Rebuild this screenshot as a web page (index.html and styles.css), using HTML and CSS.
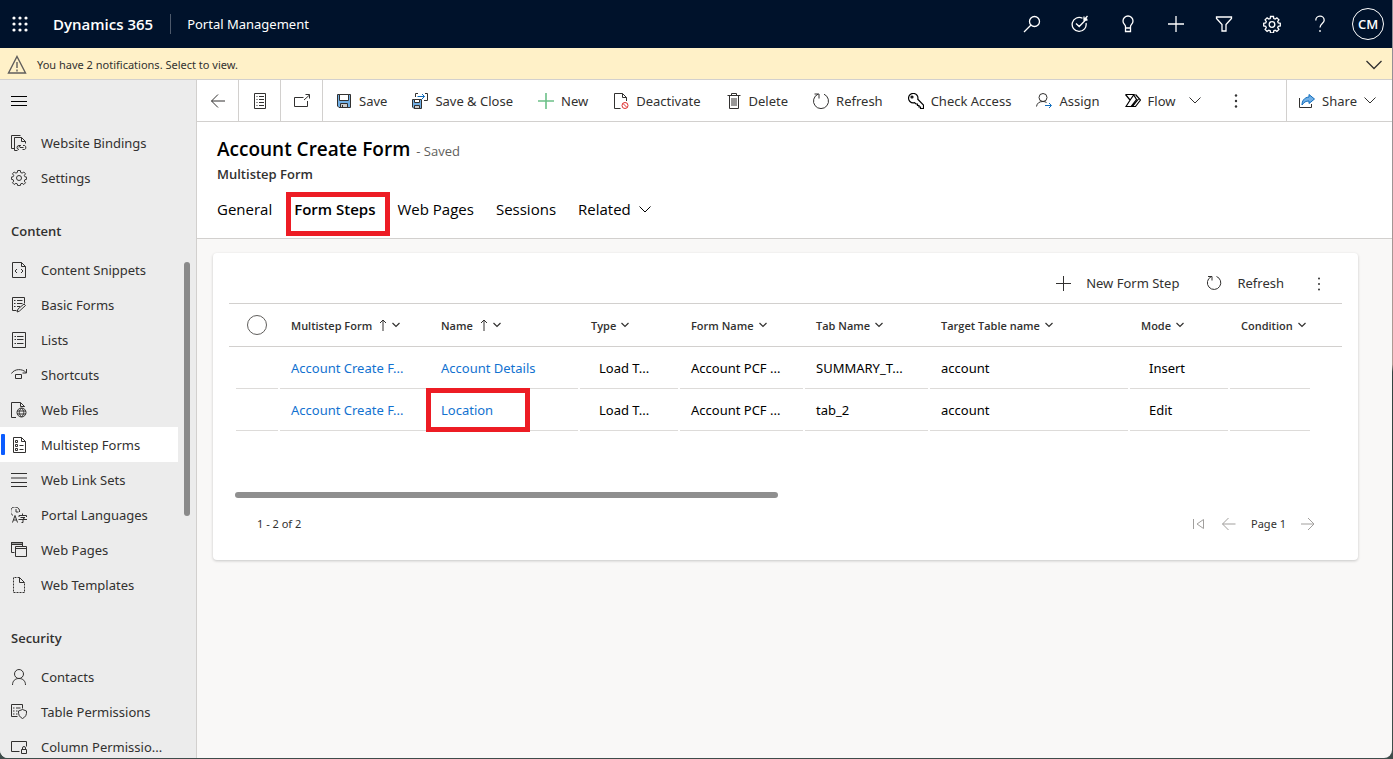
FILE: index.html
```
<!DOCTYPE html>
<html lang="en">
<head>
<meta charset="utf-8">
<title>Portal Management - Dynamics 365</title>
<link rel="stylesheet" href="styles.css">
</head>
<body>
<div class="window">
  <header class="topbar">
    <button class="icon-btn waffle" aria-label="App launcher"><svg class="ic" viewBox="0 0 16 16"><g fill="#fff" stroke="none"><circle cx="2" cy="2" r="1.6"/><circle cx="8" cy="2" r="1.6"/><circle cx="14" cy="2" r="1.6"/><circle cx="2" cy="8" r="1.6"/><circle cx="8" cy="8" r="1.6"/><circle cx="14" cy="8" r="1.6"/><circle cx="2" cy="14" r="1.6"/><circle cx="8" cy="14" r="1.6"/><circle cx="14" cy="14" r="1.6"/></g></svg></button>
    <a class="brand" href="#">Dynamics 365</a>
    <a class="app-name" href="#">Portal Management</a>
    <div class="top-actions">
      <button class="icon-btn" aria-label="Search"><svg class="ic lg" viewBox="0 0 18 18"><circle cx="11.5" cy="6.5" r="5"/><path d="M8 10 1 17"/></svg></button>
      <button class="icon-btn" aria-label="Assistant"><svg class="ic lg" viewBox="0 0 18 18"><path d="M11.500 3.300A7 7 0 1 0 15 8M5 8.500l3.200 3L16 3.500M13 1.500v3.500h3.500M13 5l3.500-4"/></svg></button>
      <button class="icon-btn" aria-label="Ideas"><svg class="ic lg" viewBox="0 0 18 18"><path d="M6.500 13v-1.500C6.500 9.500 4 9 4 6a5 5 0 0 1 10 0c0 3-2.500 3.500-2.500 5.500V13zM6.500 13v3.500h5V13"/></svg></button>
      <button class="icon-btn" aria-label="Quick create"><svg class="ic lg" viewBox="0 0 18 18"><path d="M9 1v16M1 9h16"/></svg></button>
      <button class="icon-btn" aria-label="Advanced find"><svg class="ic lg" viewBox="0 0 18 18"><path d="M1.500 2h15v1.500L11 9.500V16H7V9.500L1.500 3.500z"/></svg></button>
      <button class="icon-btn" aria-label="Settings"><svg class="ic lg" viewBox="0 0 18 18"><path d="m7.500 1.500h3l.3 2 1.400.6 1.700-1.200 2 2-1.200 1.700.6 1.400 2 .3v2.600l-2 .4-.6 1.400 1.200 1.700-2 2-1.700-1.200-1.400.6-.3 2h-3l-.3-2-1.400-.6-1.700 1.200-2-2 1.200-1.700-.6-1.400-2-.4V8.300l2-.3.6-1.400-1.200-1.700 2-2 1.700 1.200 1.400-.6z"/><circle cx="9" cy="9.500" r="2.800"/></svg></button>
      <button class="icon-btn" aria-label="Help"><svg class="ic lg" viewBox="0 0 18 18"><path d="M4.800 5.500A4.200 4.200 0 0 1 13.200 5.200C13.200 8.500 9 8.500 9 12.500M9 15v2"/></svg></button>
      <button class="avatar" aria-label="Account">CM</button>
    </div>
  </header>

  <button class="notice">
    <svg class="ic warn" viewBox="0 0 20 20"><path d="M10 1.500 18.500 18h-17zM10 7v6M10 14.500v2"/></svg>
    <span>You have 2 notifications. Select to view.</span>
    <svg class="ic chev-lg" viewBox="0 0 18 10"><path d="m1.500 1 7.500 7.500L16.500 1"/></svg>
  </button>

  <div class="body">
    <nav class="sidebar" aria-label="Site map">
      <button class="menu-btn" aria-label="Collapse menu"><svg class="ic" viewBox="0 0 16 16"><path d="M0 3.500h16M0 8.500h16M0 12.500h16"/></svg></button>
      <a class="nav-item" href="#"><svg class="ic" viewBox="0 0 16 16"><path d="M3.500 13.500h-3V.5h9M3.500 2.500h7l4 4v2M10.500 2.500v4h4M3.500 2.500v13h3M8 14.500a2 2 0 0 1 0-4h1.500M9 12.500h3.500M12 10.500a2 2 0 0 1 1.500 4H11.500M8 12.500a2 2 0 0 1 2-2"/></svg>Website Bindings</a>
      <a class="nav-item" href="#"><svg class="ic" viewBox="0 0 16 16"><path d="m6.700.5h2.600l.4 2 1.400.6L12.800 2l1.700 1.800-1.200 1.600.6 1.400 1.700.3v2.200l-1.700.4-.6 1.400 1.200 1.700-1.700 1.700-1.700-1.200-1.400.6-.4 1.700H6.700l-.4-1.700-1.400-.6-1.700 1.200-1.700-1.700 1.200-1.700-.6-1.400-1.700-.4V7.100l1.700-.3.6-1.400-1.200-1.600L3.200 2l1.700 1.100 1.400-.6z"/><circle cx="8" cy="8" r="2.500"/></svg>Settings</a>
      <h2 class="nav-head">Content</h2>
      <a class="nav-item" href="#"><svg class="ic" viewBox="0 0 16 16"><path d="M1.500.5h9l4 4v11h-13zM10.500.5v4h4M6 7 4 9l2 2M10 7l2 2-2 2"/></svg>Content Snippets</a>
      <a class="nav-item" href="#"><svg class="ic" viewBox="0 0 16 16"><path d="M5.500 13.500h-4V.5h12v6M3 3.500h1.500M6 3.500h5.500M3 6.500h1.500M6 6.500h5.500M3 9.500h1.500M6 9.500h3M6 15l1-3 6-5 1.500 1.500-6 5.500z"/></svg>Basic Forms</a>
      <a class="nav-item" href="#"><svg class="ic" viewBox="0 0 16 16"><path d="M1.500.5h13v15h-13zM3.500 4.500H5M6 4.500h6.500M3.500 7.500H5M6 7.500h6.500M3.500 11.500H5M6 11.500h6.500"/></svg>Lists</a>
      <a class="nav-item" href="#"><svg class="ic" viewBox="0 0 16 16"><path d="M.5 6.500c3-5 11-5 14.500-1M15.500 2v4h-4M4.500 7.500h6v4h-6z"/></svg>Shortcuts</a>
      <a class="nav-item" href="#"><svg class="ic" viewBox="0 0 16 16"><path d="M5 15.500H.5V.5h9l4 4V5M9.500.5v4h4"/><circle cx="10.500" cy="10.500" r="4.500"/><path d="M6 9h9M6 12h9M10.500 6c-3 3-3 6 0 9M10.500 6c3 3 3 6 0 9"/></svg>Web Files</a>
      <a class="nav-item selected" href="#" aria-current="page"><svg class="ic" viewBox="0 0 16 16"><path d="M2.500.5h8l4 4v11h-12zM10.500.5v4h4M4.500 3.500h2v2h-2zM4.500 7.500h2v2h-2zM4.500 11.500h2v2h-2zM8.500 8.500h4M8.500 12.500h4"/></svg>Multistep Forms</a>
      <a class="nav-item" href="#"><svg class="ic" viewBox="0 0 16 16"><path d="M0 1.500h16M0 6h16M0 10.500h16M0 14.500h16"/></svg>Web Link Sets</a>
      <a class="nav-item" href="#"><svg class="ic" viewBox="0 0 16 16"><path d="M2 8.500A4.500 4.500 0 1 1 8.500 5M5 2v3h2.500M1.500 15.500l2.500-7 2.500 7M2.500 13h3M11.500 6.500V8M8 10V8.500h7.500V10M9.500 10.500h4.500L12 12v3.500h-1.500M7.500 12.500H16"/></svg>Portal Languages</a>
      <a class="nav-item" href="#"><svg class="ic" viewBox="0 0 16 16"><path fill="#999" d="M.5.500h11v2H.5z"/><path d="M3.500 10.500h-3v-10h11v4M4.500 4.500h11v10h-11zM4.500 6.500h11"/></svg>Web Pages</a>
      <a class="nav-item" href="#"><svg class="ic" viewBox="0 0 16 16"><path d="M8.500.5h-6v15h11v-10" stroke-dasharray="2 1"/><path d="m8.500.5 5 5h-5z"/></svg>Web Templates</a>
      <h2 class="nav-head">Security</h2>
      <a class="nav-item" href="#"><svg class="ic" viewBox="0 0 16 16"><circle cx="8" cy="5" r="4.500"/><path d="M1.500 16c0-4 2.500-6.500 6.500-6.500s6.500 2.500 6.500 6.500"/></svg>Contacts</a>
      <a class="nav-item" href="#"><svg class="ic" viewBox="0 0 16 16"><path d="M6.500 12.500h-6V.5h11v4M2 4h1.500M5 4h4.500M2 7h1.500M5 7h1.500M2 10h1.500M5 10h1.500M11.500 5.500l4 1.500c.3 4-1 6-4 7.500C8.500 13 7.300 11 7.500 7z"/></svg>Table Permissions</a>
      <a class="nav-item" href="#"><svg class="ic" viewBox="0 0 16 16"><path d="M8.500 12.500h-8v-10h15v5M10.500 10.500h5v4h-5zM11.500 10.500V9a1.500 1.500 0 0 1 3 0v1.500"/></svg>Column Permissio...</a>
      <div class="side-scroll"></div>
    </nav>

    <main class="main">
      <div class="commands" role="toolbar" aria-label="Commands">
        <button class="cmd square" aria-label="Back"><svg class="ic" viewBox="0 0 16 16"><path d="M15 8H1.500M8 1.500 1.500 8 8 14.500"/></svg></button>
        <button class="cmd square" aria-label="Form selector"><svg class="ic" viewBox="0 0 16 16"><path d="M2.500.5h11v15h-11zM4.500 3.500h1M7 3.500h5M4.500 6.500h1M7 6.500h5M4.500 9.500h1M7 9.500h5M4.500 12.500h1M7 12.500h5"/></svg></button>
        <button class="cmd square" aria-label="Open in new window"><svg class="ic" viewBox="0 0 16 16"><path d="M9.500 4.500h-9v9h13V8M10 7l5.500-5M11.500 1.500h4v4"/></svg></button>
        <button class="cmd"><svg class="ic" viewBox="0 0 16 16"><path fill="#71afe5" d="M1.500 1.500h13v13H3l-1.500-1.500z"/><path fill="#fff" d="M3.500 1.500h9v6h-9z"/><path fill="#ccc" d="M4.500 10.500h7v4h-7z"/><path d="M6.500 12v2"/></svg>Save</button>
        <button class="cmd"><svg class="ic" viewBox="0 0 16 16"><path fill="#71afe5" d="M.5 6.500h9v9H2L.5 14z"/><path fill="#fff" d="M2.500 6.500h5v3h-5z"/><path fill="#ccc" d="M2.500 12.500h5v3h-5z"/><path d="M3.500 4V.5H6M13 .5h2.500v7H12"/><path stroke="#0f6cbd" d="M5.500 3.500h7M10 1l2.500 2.500L10 6"/></svg>Save &amp; Close</button>
        <button class="cmd"><svg class="ic new" viewBox="0 0 16 16"><path d="M8 0v16M0 8h16"/></svg>New</button>
        <button class="cmd"><svg class="ic" viewBox="0 0 16 16"><path d="M7.500 15.500h-6V.5h8l4 4V8M9.500.5v4h4"/><g stroke="#e03030"><circle cx="12" cy="12.500" r="3"/><path d="m10 10.500 4 4"/></g></svg>Deactivate</button>
        <button class="cmd"><svg class="ic" viewBox="0 0 16 16"><path d="M1.500 2.500h13M5.500 2.500v-2h5v2M3.500 2.500v13h9v-13M6 5v8M8 5v8M10 5v8"/></svg>Delete</button>
        <button class="cmd"><svg class="ic" viewBox="0 0 16 16"><path d="M11 1.200A7.500 7.500 0 1 1 5 1.200M1.500 1h4.500v4.500"/></svg>Refresh</button>
        <button class="cmd"><svg class="ic dark" viewBox="0 0 16 16"><path d="M5.500 9.800A4.700 4.700 0 1 1 9.800 6.200L15.500 12v3.500h-3V14H11v-1.500H9.500V11H8L6.500 9.600z"/><circle cx="4" cy="4" r="1"/></svg>Check Access</button>
        <button class="cmd"><svg class="ic" viewBox="0 0 16 16"><circle cx="7" cy="4.500" r="4"/><path d="M.5 13.500c.5-3.500 3-5 6.500-5 1.500 0 2.500.3 3.500 1"/><path stroke="#0f6cbd" d="M9 12.500h6M13 10l2.500 2.500L13 15"/></svg>Assign</button>
        <button class="cmd flow"><svg class="ic dark" viewBox="0 0 16 16"><path d="M.5 1.500H9L5.500 6.500 1 13.500h5l5.500-7L8.500 1.500M.5 1.500 5 7M10.500 1.500l5 5.500-5 6.500H7.500L13.500 6"/></svg>Flow<svg class="ic chev" viewBox="0 0 12 7"><path d="m.5.500 5.500 5.500L11.500.5"/></svg></button>
        <button class="cmd dots" aria-label="More commands"><svg class="ic" viewBox="0 0 16 16"><g fill="#333" stroke="none"><circle cx="8" cy="2.500" r="1.200"/><circle cx="8" cy="8" r="1.200"/><circle cx="8" cy="13.500" r="1.200"/></g></svg></button>
        <button class="cmd share"><svg class="ic" viewBox="0 0 16 16"><path d="M.5 5v9.500h12V11"/><path fill="#71afe5" stroke="#0f6cbd" d="M10 1.500 15.500 6 10 10.500V8C7 8 5 9 3 12c0-4 2-7.500 7-8z"/></svg>Share<svg class="ic chev" viewBox="0 0 12 7"><path d="m.5.500 5.500 5.500L11.500.5"/></svg></button>
      </div>

      <section class="record">
        <div class="title-row"><h1 class="title">Account Create Form</h1><span class="status">- Saved</span></div>
        <p class="entity">Multistep Form</p>
        <div class="tabs" role="tablist">
          <button class="tab" role="tab">General</button>
          <button class="tab active marked" role="tab" aria-selected="true">Form Steps</button>
          <button class="tab" role="tab">Web Pages</button>
          <button class="tab" role="tab">Sessions</button>
          <button class="tab" role="tab">Related<svg class="ic chev" viewBox="0 0 12 7"><path d="m.5.500 5.500 5.500L11.500.5"/></svg></button>
        </div>
      </section>

      <section class="card">
        <div class="grid-tools">
          <button class="tool"><svg class="ic" viewBox="0 0 16 16"><path d="M8.500 1v15M1 8.500h15"/></svg>New Form Step</button>
          <button class="tool"><svg class="ic" viewBox="0 0 16 16"><path d="M10.500 1.500A6.700 6.700 0 1 1 5 1.800M2 1.500h4v4"/></svg>Refresh</button>
          <button class="tool" aria-label="More"><svg class="ic" viewBox="0 0 16 16"><g fill="#333" stroke="none"><circle cx="8" cy="3.500" r="1"/><circle cx="8" cy="9" r="1"/><circle cx="8" cy="14.500" r="1"/></g></svg></button>
        </div>
        <table class="grid">
          <colgroup><col class="w-check"><col class="w-150"><col class="w-150"><col class="w-100"><col class="w-125"><col class="w-125"><col class="w-200"><col class="w-100"><col></colgroup>
          <thead>
            <tr>
              <th class="check"><input type="checkbox" class="round" aria-label="Select all rows"></th>
              <th>Multistep Form<svg class="ic up" viewBox="0 0 8 12"><path d="M4 12V1M1 4l3-3 3 3"/></svg><svg class="ic mini" viewBox="0 0 8 6"><path d="m.5 1 3.500 3.500L7.500 1"/></svg></th>
              <th>Name<svg class="ic up" viewBox="0 0 8 12"><path d="M4 12V1M1 4l3-3 3 3"/></svg><svg class="ic mini" viewBox="0 0 8 6"><path d="m.5 1 3.500 3.500L7.500 1"/></svg></th>
              <th>Type<svg class="ic mini" viewBox="0 0 8 6"><path d="m.5 1 3.500 3.500L7.500 1"/></svg></th>
              <th>Form Name<svg class="ic mini" viewBox="0 0 8 6"><path d="m.5 1 3.500 3.500L7.500 1"/></svg></th>
              <th>Tab Name<svg class="ic mini" viewBox="0 0 8 6"><path d="m.5 1 3.500 3.500L7.500 1"/></svg></th>
              <th>Target Table name<svg class="ic mini" viewBox="0 0 8 6"><path d="m.5 1 3.500 3.500L7.500 1"/></svg></th>
              <th>Mode<svg class="ic mini" viewBox="0 0 8 6"><path d="m.5 1 3.500 3.500L7.500 1"/></svg></th>
              <th>Condition<svg class="ic mini" viewBox="0 0 8 6"><path d="m.5 1 3.500 3.500L7.500 1"/></svg></th>
            </tr>
          </thead>
          <tbody>
            <tr>
              <td class="first"><div class="cell"></div></td>
              <td><div class="cell"><a href="#">Account Create F...</a></div></td>
              <td><div class="cell"><a href="#">Account Details</a></div></td>
              <td><div class="cell inset">Load T...</div></td>
              <td><div class="cell">Account PCF ...</div></td>
              <td><div class="cell">SUMMARY_T...</div></td>
              <td><div class="cell">account</div></td>
              <td><div class="cell inset">Insert</div></td>
              <td class="last"><div class="cell"></div></td>
            </tr>
            <tr>
              <td class="first"><div class="cell"></div></td>
              <td><div class="cell"><a href="#">Account Create F...</a></div></td>
              <td class="marked"><div class="cell"><a href="#">Location</a></div></td>
              <td><div class="cell inset">Load T...</div></td>
              <td><div class="cell">Account PCF ...</div></td>
              <td><div class="cell">tab_2</div></td>
              <td><div class="cell">account</div></td>
              <td><div class="cell inset">Edit</div></td>
              <td class="last"><div class="cell"></div></td>
            </tr>
          </tbody>
        </table>
        <div class="h-scroll"><div class="h-thumb"></div></div>
        <div class="pager">
          <span class="count">1 - 2 of 2</span>
          <button class="page-btn" aria-label="First page" disabled><svg class="ic" viewBox="0 0 16 16"><path d="M2.500 3v10M12.500 3.500v9L6 8z"/></svg></button>
          <button class="page-btn" aria-label="Previous page" disabled><svg class="ic" viewBox="0 0 16 16"><path d="M14.500 8h-13M7.500 2l-6 6 6 6"/></svg></button>
          <span class="page-no">Page 1</span>
          <button class="page-btn" aria-label="Next page" disabled><svg class="ic" viewBox="0 0 16 16"><path d="M1 8h13M8 2l6 6-6 6"/></svg></button>
        </div>
      </section>
    </main>
  </div>
</div>
</body>
</html>
```
FILE: styles.css
```
*, *::before, *::after { box-sizing: border-box; }
html, body { height: 100%; }
body {
  margin: 0;
  padding: 0 1px 1px 0;
  overflow: hidden;
  background: linear-gradient(#8d8d95 0, #b09a94 48%, #34423f 49%, #3f4d4b 100%);
  font-family: "Noto Sans", "Open Sans", sans-serif;
  font-size: 13px;
  line-height: 20px;
  color: #323130;
}
button {
  margin: 0;
  padding: 0;
  border: 0;
  background: none;
  font: inherit;
  color: inherit;
  white-space: nowrap;
}
a { color: inherit; text-decoration: none; }
h1, h2, p { margin: 0; }

.ic {
  flex: none;
  width: 16px;
  height: 16px;
  fill: none;
  stroke: currentColor;
  stroke-width: 1;
}
.ic.lg { width: 18px; height: 18px; stroke-width: 1.3; }
.ic.dark { stroke: #000; stroke-width: 1.2; }
.ic.new { stroke: #6cc088; stroke-width: 1.6; }
.ic.chev { width: 12px; height: 7px; }

.window {
  display: flex;
  flex-direction: column;
  height: 100%;
  overflow: hidden;
  border-radius: 0 0 8px 8px;
  background: #f9f8f7;
}

.topbar {
  display: flex;
  flex: none;
  align-items: center;
  height: 48px;
  padding: 0 8px 0 12px;
  background: #00122b;
  color: #fff;
}
.icon-btn { display: flex; align-items: center; justify-content: center; }
.brand {
  margin-left: 25px;
  padding-right: 17px;
  border-right: 1px solid #4d596b;
  font-family: "Open Sans", sans-serif;
  font-size: 15px;
  font-weight: 600;
}
.app-name { margin-left: 16px; }
.top-actions { display: flex; align-items: center; margin-left: auto; }
.top-actions .icon-btn { width: 48px; height: 48px; }
.avatar {
  width: 32px;
  height: 32px;
  margin-left: 8px;
  border: 1px solid #fff;
  border-radius: 50%;
  font-family: "Open Sans", sans-serif;
  font-weight: 600;
}

.notice {
  display: flex;
  flex: none;
  align-items: center;
  height: 32px;
  padding: 2px 9px 0 7px;
  border-bottom: 1px solid #d2d0ce;
  background: #fff1c8;
  font-size: 11px;
}
.notice span { margin-right: auto; }
.warn { width: 20px; height: 20px; margin-right: 10px; stroke: #605e5c; stroke-width: 1.4; }
.chev-lg { width: 18px; height: 10px; stroke-width: 1.3; }

.body { display: flex; flex: 1; min-height: 0; }

.sidebar {
  position: relative;
  flex: none;
  width: 197px;
  overflow: hidden;
  border-right: 1px solid #d2d0ce;
  background: #ececec;
}
.menu-btn { display: flex; align-items: center; height: 45px; padding: 0 11px 4px; color: #000; }
.nav-item {
  position: relative;
  display: flex;
  align-items: center;
  gap: 14px;
  width: 178px;
  height: 35px;
  padding-left: 11px;
  white-space: nowrap;
}
.selected { background: #fff; }
.selected::before {
  content: "";
  position: absolute;
  left: 1px;
  top: 7px;
  width: 4px;
  height: 21px;
  border-radius: 1px;
  background: #0b5cff;
}
.nav-head {
  height: 57px;
  padding: 26px 0 0 11px;
  font-family: "Open Sans", sans-serif;
  font-size: 13px;
  font-weight: 600;
}
.side-scroll {
  position: absolute;
  top: 182px;
  right: 6px;
  width: 6px;
  height: 254px;
  border-radius: 3px;
  background: #8a8a8a;
}

.main { flex: 1; min-width: 0; }
.commands {
  display: flex;
  height: 42px;
  border-bottom: 1px solid #d2d0ce;
  background: #fff;
}
.cmd { display: flex; flex: none; align-items: center; gap: 7px; padding: 0 12px 0 13px; }
.square { justify-content: center; width: 42px; padding: 0; border-right: 1px solid #d2d0ce; }
.flow .chev { margin-left: 7px; }
.dots { margin-left: 2px; }
.share { margin-left: auto; padding: 0 16px 0 12px; border-left: 1px solid #d2d0ce; }

.record {
  height: 117px;
  padding: 14px 20px 0;
  border-bottom: 1px solid #d2d0ce;
  background: #fff;
  font-family: "Open Sans", sans-serif;
}
.title-row { display: flex; align-items: baseline; gap: 6px; line-height: 26px; }
.title { font-size: 19px; font-weight: 600; color: #000; }
.status { color: #605e5c; }
.entity { font-weight: 600; line-height: 20px; }
.tabs { display: flex; gap: 22px; padding-top: 4px; }
.tab {
  position: relative;
  display: flex;
  align-items: center;
  gap: 8px;
  height: 42px;
  font-size: 15px;
  color: #000;
}
.tab.active { font-weight: 600; }
.marked { position: relative; }
.marked::after {
  content: "";
  position: absolute;
  left: -8px;
  top: 4px;
  width: 104px;
  height: 44px;
  border: 5px solid #ed1c24;
}
td.marked::after { left: -3px; top: -1px; }

.card {
  margin: 14px 34px 0 16px;
  padding: 0 16px 26px;
  border-radius: 4px;
  background: #fff;
  box-shadow: 0 1px 3px rgba(0, 0, 0, 0.2);
}
.grid-tools { display: flex; justify-content: flex-end; gap: 27px; height: 50px; padding: 10px 15px 0 0; }
.tool { display: flex; align-items: center; gap: 15px; height: 40px; }

.grid { width: 100%; border-collapse: collapse; table-layout: fixed; }
.w-check { width: 50px; }
.w-100 { width: 100px; }
.w-125 { width: 125px; }
.w-150 { width: 150px; }
.w-200 { width: 200px; }
.grid th {
  height: 43px;
  padding: 2px 0 0 12px;
  border: 1px solid #d2d0ce;
  border-width: 1px 0;
  text-align: left;
  font-family: "Open Sans", sans-serif;
  font-size: 11px;
  font-weight: 600;
  white-space: nowrap;
}
.grid th.check { padding: 0 0 0 18px; }
.round {
  display: block;
  width: 20px;
  height: 20px;
  margin: 0;
  appearance: none;
  border: 1px solid #605e5c;
  border-radius: 50%;
}
.up { width: 8px; height: 12px; margin-left: 7px; vertical-align: -1px; }
.mini { width: 8px; height: 6px; margin-left: 5px; vertical-align: 2px; stroke-width: 1.2; }
.grid td { padding: 0 1px; }
.grid td.first { padding-left: 7px; }
.grid td.last { padding-right: 32px; }
.cell {
  height: 42px;
  padding-left: 11px;
  border-bottom: 1px solid #dddbd9;
  line-height: 42px;
  color: #000;
  white-space: nowrap;
}
.inset { padding-left: 19px; }
.cell a { color: #1272d0; }

.h-scroll { padding: 61px 6px 0; }
.h-thumb { width: 49.3%; height: 6px; border-radius: 3px; background: #8f8f8f; }
.pager { display: flex; align-items: center; padding: 16px 26px 0 28px; font-size: 11px; }
.count { margin-right: auto; }
.page-btn { display: flex; margin-left: 14px; color: #a19f9d; }
.page-no { margin-left: 14px; }
```
